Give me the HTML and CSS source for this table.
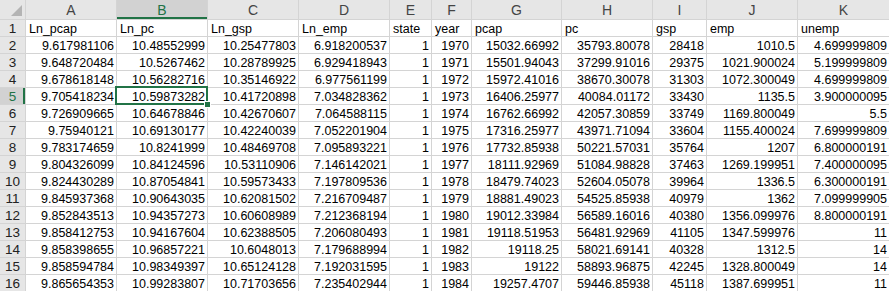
FILE: index.html
```html
<!DOCTYPE html>
<html>
<head>
<meta charset="utf-8">
<link rel="stylesheet" href="styles.css">
</head>
<body>
<div class="sheet">
  <div class="corner"><span class="tri"></span></div>
  <div class="ch">A</div><div class="ch ch-sel">B</div><div class="ch">C</div><div class="ch">D</div><div class="ch">E</div><div class="ch">F</div><div class="ch">G</div><div class="ch">H</div><div class="ch">I</div><div class="ch">J</div><div class="ch">K</div>

  <div class="rh">1</div><div class="c t">Ln_pcap</div><div class="c t">Ln_pc</div><div class="c t">Ln_gsp</div><div class="c t">Ln_emp</div><div class="c t">state</div><div class="c t">year</div><div class="c t">pcap</div><div class="c t">pc</div><div class="c t">gsp</div><div class="c t">emp</div><div class="c t">unemp</div>

  <div class="rh">2</div><div class="c">9.617981106</div><div class="c">10.48552999</div><div class="c">10.25477803</div><div class="c">6.918200537</div><div class="c">1</div><div class="c">1970</div><div class="c">15032.66992</div><div class="c">35793.80078</div><div class="c">28418</div><div class="c">1010.5</div><div class="c">4.699999809</div>

  <div class="rh">3</div><div class="c">9.648720484</div><div class="c">10.5267462</div><div class="c">10.28789925</div><div class="c">6.929418943</div><div class="c">1</div><div class="c">1971</div><div class="c">15501.94043</div><div class="c">37299.91016</div><div class="c">29375</div><div class="c">1021.900024</div><div class="c">5.199999809</div>

  <div class="rh">4</div><div class="c">9.678618148</div><div class="c">10.56282716</div><div class="c">10.35146922</div><div class="c">6.977561199</div><div class="c">1</div><div class="c">1972</div><div class="c">15972.41016</div><div class="c">38670.30078</div><div class="c">31303</div><div class="c">1072.300049</div><div class="c">4.699999809</div>

  <div class="rh rh-sel">5</div><div class="c">9.705418234</div><div class="c sel">10.59873282<span class="handle"></span></div><div class="c">10.41720898</div><div class="c">7.034828362</div><div class="c">1</div><div class="c">1973</div><div class="c">16406.25977</div><div class="c">40084.01172</div><div class="c">33430</div><div class="c">1135.5</div><div class="c">3.900000095</div>

  <div class="rh">6</div><div class="c">9.726909665</div><div class="c">10.64678846</div><div class="c">10.42670607</div><div class="c">7.064588115</div><div class="c">1</div><div class="c">1974</div><div class="c">16762.66992</div><div class="c">42057.30859</div><div class="c">33749</div><div class="c">1169.800049</div><div class="c">5.5</div>

  <div class="rh">7</div><div class="c">9.75940121</div><div class="c">10.69130177</div><div class="c">10.42240039</div><div class="c">7.052201904</div><div class="c">1</div><div class="c">1975</div><div class="c">17316.25977</div><div class="c">43971.71094</div><div class="c">33604</div><div class="c">1155.400024</div><div class="c">7.699999809</div>

  <div class="rh">8</div><div class="c">9.783174659</div><div class="c">10.8241999</div><div class="c">10.48469708</div><div class="c">7.095893221</div><div class="c">1</div><div class="c">1976</div><div class="c">17732.85938</div><div class="c">50221.57031</div><div class="c">35764</div><div class="c">1207</div><div class="c">6.800000191</div>

  <div class="rh">9</div><div class="c">9.804326099</div><div class="c">10.84124596</div><div class="c">10.53110906</div><div class="c">7.146142021</div><div class="c">1</div><div class="c">1977</div><div class="c">18111.92969</div><div class="c">51084.98828</div><div class="c">37463</div><div class="c">1269.199951</div><div class="c">7.400000095</div>

  <div class="rh">10</div><div class="c">9.824430289</div><div class="c">10.87054841</div><div class="c">10.59573433</div><div class="c">7.197809536</div><div class="c">1</div><div class="c">1978</div><div class="c">18479.74023</div><div class="c">52604.05078</div><div class="c">39964</div><div class="c">1336.5</div><div class="c">6.300000191</div>

  <div class="rh">11</div><div class="c">9.845937368</div><div class="c">10.90643035</div><div class="c">10.62081502</div><div class="c">7.216709487</div><div class="c">1</div><div class="c">1979</div><div class="c">18881.49023</div><div class="c">54525.85938</div><div class="c">40979</div><div class="c">1362</div><div class="c">7.099999905</div>

  <div class="rh">12</div><div class="c">9.852843513</div><div class="c">10.94357273</div><div class="c">10.60608989</div><div class="c">7.212368194</div><div class="c">1</div><div class="c">1980</div><div class="c">19012.33984</div><div class="c">56589.16016</div><div class="c">40380</div><div class="c">1356.099976</div><div class="c">8.800000191</div>

  <div class="rh">13</div><div class="c">9.858412753</div><div class="c">10.94167604</div><div class="c">10.62388505</div><div class="c">7.206080493</div><div class="c">1</div><div class="c">1981</div><div class="c">19118.51953</div><div class="c">56481.92969</div><div class="c">41105</div><div class="c">1347.599976</div><div class="c">11</div>

  <div class="rh">14</div><div class="c">9.858398655</div><div class="c">10.96857221</div><div class="c">10.6048013</div><div class="c">7.179688994</div><div class="c">1</div><div class="c">1982</div><div class="c">19118.25</div><div class="c">58021.69141</div><div class="c">40328</div><div class="c">1312.5</div><div class="c">14</div>

  <div class="rh">15</div><div class="c">9.858594784</div><div class="c">10.98349397</div><div class="c">10.65124128</div><div class="c">7.192031595</div><div class="c">1</div><div class="c">1983</div><div class="c">19122</div><div class="c">58893.96875</div><div class="c">42245</div><div class="c">1328.800049</div><div class="c">14</div>

  <div class="rh">16</div><div class="c">9.865654353</div><div class="c">10.99283807</div><div class="c">10.71703656</div><div class="c">7.235402944</div><div class="c">1</div><div class="c">1984</div><div class="c">19257.4707</div><div class="c">59446.85938</div><div class="c">45118</div><div class="c">1387.699951</div><div class="c">11</div>
</div>
</body>
</html>
```

FILE: styles.css
```css
html, body {
  margin: 0;
  padding: 0;
  background: #ffffff;
  overflow: hidden;
}

.sheet {
  display: grid;
  grid-template-columns: 25px 90px 90px 90px 90px 41px 39px 89px 90px 53px 90px 91px;
  grid-template-rows: 19px repeat(16, 16px);
  gap: 1px;
  background: #d4d4d4;
  width: 889px;
  font-family: "Liberation Sans", Arial, sans-serif;
  font-size: 12.5px;
  color: #000;
}

.corner {
  background: #e6e6e6;
  position: relative;
}

.tri {
  position: absolute;
  right: 3px;
  bottom: 3px;
  width: 0;
  height: 0;
  border-left: 11px solid transparent;
  border-bottom: 11px solid #b4b4b4;
}

.ch {
  background: #e6e6e6;
  color: #444;
  font-size: 14px;
  line-height: 20px;
  text-align: center;
}

.ch-sel {
  background: #d2d2d2;
  color: #217346;
  box-shadow: inset 0 -2px 0 #217346;
}

.rh {
  background: #e6e6e6;
  color: #222;
  font-size: 13.5px;
  line-height: 17px;
  text-align: center;
}

.rh-sel {
  background: #d2d2d2;
  color: #217346;
  box-shadow: inset -2px 0 0 #217346;
}

.c {
  background: #ffffff;
  line-height: 16px;
  padding: 1px 2px 0 3px;
  text-align: right;
  white-space: nowrap;
  overflow: hidden;
  min-width: 0;
}

.c.t {
  text-align: left;
}

.sel {
  position: relative;
  overflow: visible;
  z-index: 2;
}

.sel::before {
  content: "";
  position: absolute;
  left: -2px;
  top: -2px;
  right: -1px;
  bottom: -1px;
  border: 2px solid #217346;
  pointer-events: none;
}

.handle {
  position: absolute;
  right: -4px;
  bottom: -4px;
  width: 5px;
  height: 5px;
  background: #217346;
  border: 1px solid #ffffff;
}
```
